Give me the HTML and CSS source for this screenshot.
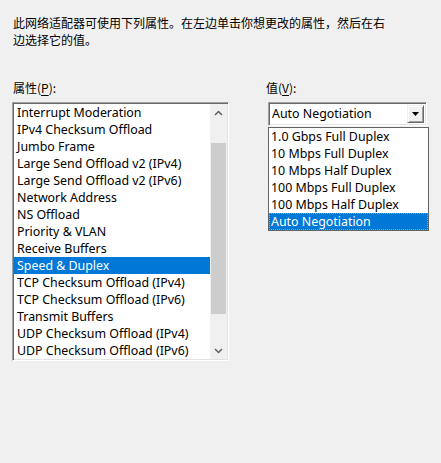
FILE: index.html
```html
<!DOCTYPE html>
<html lang="zh-CN">
<head>
<meta charset="utf-8">
<link rel="stylesheet" href="styles.css">
</head>
<body>
<p class="intro">此网络适配器可使用下列属性。在左边单击你想更改的属性，然后在右边选择它的值。</p>
<div class="columns">
  <div class="col-left">
    <div class="label">属性(<u>P</u>):</div>
    <div class="listbox">
      <ul class="items">
        <li>Interrupt Moderation</li>
        <li>IPv4 Checksum Offload</li>
        <li>Jumbo Frame</li>
        <li>Large Send Offload v2 (IPv4)</li>
        <li>Large Send Offload v2 (IPv6)</li>
        <li>Network Address</li>
        <li>NS Offload</li>
        <li>Priority &amp; VLAN</li>
        <li>Receive Buffers</li>
        <li class="selected">Speed &amp; Duplex</li>
        <li>TCP Checksum Offload (IPv4)</li>
        <li>TCP Checksum Offload (IPv6)</li>
        <li>Transmit Buffers</li>
        <li>UDP Checksum Offload (IPv4)</li>
        <li>UDP Checksum Offload (IPv6)</li>
      </ul>
      <div class="scrollbar">
        <div class="arrow">
          <svg width="9" height="6" viewBox="0 0 9 6"><path d="M1 5 L4.5 1.5 L8 5" fill="none" stroke="#606060" stroke-width="1.5"/></svg>
        </div>
        <div class="track"><div class="thumb"></div></div>
        <div class="arrow">
          <svg width="9" height="6" viewBox="0 0 9 6"><path d="M1 1 L4.5 4.5 L8 1" fill="none" stroke="#606060" stroke-width="1.5"/></svg>
        </div>
      </div>
    </div>
  </div>
  <div class="col-right">
    <div class="label">值(<u>V</u>):</div>
    <div class="combo">
      <div class="combo-text">Auto Negotiation</div>
      <div class="combo-btn">
        <svg width="7" height="4" viewBox="0 0 7 4"><path d="M0 0 H7 L3.5 4 Z" fill="#000"/></svg>
      </div>
    </div>
    <ul class="dropdown">
      <li>1.0 Gbps Full Duplex</li>
      <li>10 Mbps Full Duplex</li>
      <li>10 Mbps Half Duplex</li>
      <li>100 Mbps Full Duplex</li>
      <li>100 Mbps Half Duplex</li>
      <li class="selected focus">Auto Negotiation</li>
    </ul>
  </div>
</div>
</body>
</html>
```
FILE: styles.css
```css
html, body {
  margin: 0;
  padding: 0;
  background: #f0f0f0;
  color: #000;
}
body {
  font-family: "Noto Sans", "Noto Sans CJK SC", sans-serif;
  font-size: 12.4px;
  width: 441px;
  height: 463px;
  overflow: hidden;
}
.intro {
  margin: 14px 0 0 13px;
  width: 378px;
  font-family: "Noto Sans CJK SC", sans-serif;
  font-size: 12px;
  line-height: 17px;
}
.columns {
  display: flex;
  margin-top: 31px;
  padding-left: 12px;
}
.col-left {
  width: 217px;
}
.col-right {
  margin-left: 36px;
}
.label {
  font-family: "Noto Sans CJK SC", sans-serif;
  font-size: 12px;
  line-height: 17px;
  padding-left: 1px;
  height: 23px;
}
.label u {
  text-decoration-thickness: 1px;
  text-underline-offset: 2px;
}
.listbox {
  display: flex;
  width: 217px;
  height: 259px;
  box-sizing: border-box;
  border: 1px solid;
  border-color: #a0a0a0 #ffffff #ffffff #a0a0a0;
  box-shadow: inset 1px 1px 0 #696969, inset -1px -1px 0 #e3e3e3;
  background: #fff;
  padding: 1px;
}
.items {
  list-style: none;
  margin: 0;
  padding: 0;
  flex: 1;
}
.items li, .dropdown li {
  height: 17px;
  line-height: 17px;
  padding-left: 3px;
  white-space: nowrap;
}
.selected {
  background: #0078d7;
  color: #fff;
}
.scrollbar {
  width: 17px;
  display: flex;
  flex-direction: column;
  background: #f0f0f0;
}
.arrow {
  height: 17px;
  display: flex;
  align-items: center;
  justify-content: center;
}
.track {
  flex: 1;
  padding: 22px 1px 28px 1px;
  display: flex;
}
.thumb {
  flex: 1;
  background: #cdcdcd;
}
.combo {
  margin-left: 3px;
  width: 159px;
  height: 24px;
  box-sizing: border-box;
  border: 1px solid;
  border-color: #a0a0a0 #ffffff #ffffff #a0a0a0;
  box-shadow: inset 1px 1px 0 #696969, inset -1px -1px 0 #e3e3e3;
  background: #fff;
  padding: 2px;
  display: flex;
}
.combo-text {
  flex: 1;
  line-height: 18px;
  padding-left: 1px;
}
.combo-btn {
  width: 17px;
  box-sizing: border-box;
  background: #f0f0f0;
  border: 1px solid;
  border-color: #f0f0f0 #696969 #696969 #f0f0f0;
  box-shadow: inset 1px 1px 0 #fff, inset -1px -1px 0 #a0a0a0;
  display: flex;
  align-items: center;
  justify-content: center;
}
.dropdown {
  list-style: none;
  margin: 1px 0 0 3px;
  padding: 0;
  width: 161px;
  box-sizing: border-box;
  border: 1px solid #646464;
  background: #fff;
}
.dropdown li {
  padding-left: 2px;
}
.dropdown li.focus {
  outline: 1px dotted #ff8728;
  outline-offset: -1px;
}
```
